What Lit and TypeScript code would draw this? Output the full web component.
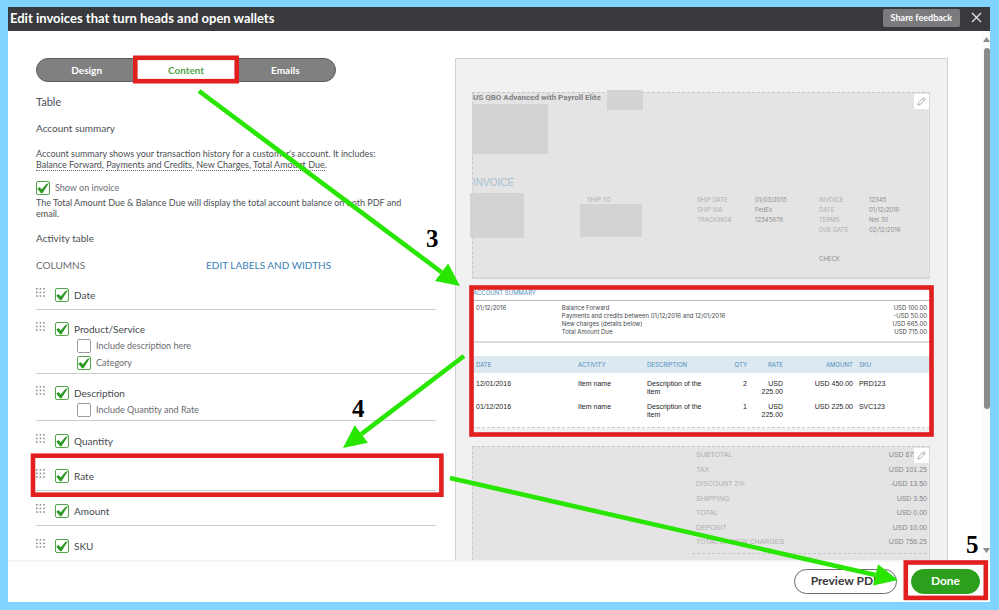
import { LitElement, html, css, svg, nothing } from "lit";
import { customElement, property } from "lit/decorators.js";

interface Column {
  label: string;
  options?: { label: string; checked: boolean }[];
}

const COLUMNS: Column[] = [
  { label: "Date" },
  {
    label: "Product/Service",
    options: [
      { label: "Include description here", checked: false },
      { label: "Category", checked: true },
    ],
  },
  { label: "Description", options: [{ label: "Include Quantity and Rate", checked: false }] },
  { label: "Quantity" },
  { label: "Rate" },
  { label: "Amount" },
  { label: "SKU" },
];

const TERMS = ["Balance Forward", "Payments and Credits", "New Charges", "Total Amount Due"];

const SUMMARY = [
  ["Balance Forward", "USD 100.00"],
  ["Payments and credits between 01/12/2016 and 12/01/2016", "-USD 50.00"],
  ["New charges (details below)", "USD 665.00"],
  ["Total Amount Due", "USD 715.00"],
];

const ITEMS = [
  ["12/01/2016", "Item name", "Description of the item", "2", "USD 225.00", "USD 450.00", "PRD123"],
  ["01/12/2016", "Item name", "Description of the item", "1", "USD 225.00", "USD 225.00", "SVC123"],
];

const TOTALS = [
  ["SUBTOTAL", "USD 675.00"],
  ["TAX", "USD 101.25"],
  ["DISCOUNT 2%", "-USD 13.50"],
  ["SHIPPING", "USD 3.50"],
  ["TOTAL", "USD 0.00"],
  ["DEPOSIT", "USD 10.00"],
  ["TOTAL OF NEW CHARGES", "USD 756.25"],
];

@customElement("check-option")
class CheckOption extends LitElement {
  @property() label = "";
  @property({ type: Boolean }) checked = false;
  @property({ type: Boolean, reflect: true }) small = false;

  static styles = css`
    :host { display: block; }
    .option {
      display: flex;
      align-items: center;
      gap: 5px;
      height: 14px;
      font-size: 10px;
      line-height: 14px;
      color: #45484c;
      white-space: nowrap;
    }
    :host([small]) .option { font-size: 9px; color: #6b6c72; }
    .box {
      appearance: none;
      box-sizing: border-box;
      flex: none;
      width: 14px;
      height: 14px;
      margin: 0;
      border: 1px solid #9a9ca0;
      border-radius: 2px;
      background: #fff;
    }
    .box:checked { border-color: #53a34a; }
    .box:checked::before {
      content: "";
      display: block;
      width: 12px;
      height: 12px;
      background: #2f9a26;
      clip-path: polygon(2% 56%, 20% 42%, 40% 60%, 78% 16%, 100% 8%, 46% 94%, 34% 94%);
    }
  `;

  render() {
    return html`<label class="option">
      <input class="box" type="checkbox" .checked=${this.checked} />
      <span>${this.label}</span>
    </label>`;
  }
}

@customElement("settings-panel")
class SettingsPanel extends LitElement {
  static styles = css`
    :host { display: block; color: #4c4f54; }
    h2, h3, p, ul { margin: 0; padding: 0; font-weight: 400; }
    .tabs {
      display: grid;
      grid-template-columns: repeat(3, 1fr);
      width: 75%;
      height: 24px;
      box-sizing: border-box;
      border: 1px solid #5c5c5c;
      border-radius: 12px;
      background: #808080;
      overflow: hidden;
    }
    .tab {
      border: 0;
      padding: 0;
      background: none;
      color: #fff;
      font: 700 10px/20px var(--ui);
    }
    .tab.active { background: #fff; color: #53a34a; }
    h2 { margin-top: 12px; font-size: 11px; line-height: 16px; }
    h3 { font-size: 10px; line-height: 12px; }
    .summary-title { margin-top: 12px; }
    p { font-size: 9px; line-height: 11px; }
    .intro { margin-top: 14px; }
    .term { border-bottom: 1px dotted #6b6c72; }
    .show { margin-top: 11px; }
    .note { margin-top: 2px; padding-right: 20px; }
    .activity-title { margin-top: 13px; }
    .heads {
      display: grid;
      grid-template-columns: 170fr 230fr;
      margin-top: 15px;
      font-size: 10px;
      line-height: 12px;
      color: #6b6c72;
    }
    a { color: #3a7fb5; text-decoration: none; }
    ul { list-style: none; margin-top: 4px; }
    li {
      display: grid;
      grid-template-columns: 9px 1fr;
      column-gap: 10px;
      padding: 13px 0 7px;
      border-bottom: 1px solid #c9cbcf;
    }
    li.nested { padding: 12px 0 3px; }
    .grip { width: 9px; height: 9px; fill: #8d9096; }
    .options { display: grid; gap: 3px; }
    .child { margin-left: 22px; }
  `;

  render() {
    return html`
      <div class="tabs" role="tablist">
        <button class="tab" role="tab">Design</button>
        <button class="tab active" role="tab" aria-selected="true">Content</button>
        <button class="tab" role="tab">Emails</button>
      </div>
      <h2>Table</h2>
      <h3 class="summary-title">Account summary</h3>
      <p class="intro">
        Account summary shows your transaction history for a customer's account. It includes:<br />
        ${TERMS.map((t, i) => html`${i ? ", " : nothing}<span class="term">${t}</span>`)}.
      </p>
      <check-option class="show" small label="Show on invoice" checked></check-option>
      <p class="note">
        The Total Amount Due &amp; Balance Due will display the total account balance on both PDF and email.
      </p>
      <h3 class="activity-title">Activity table</h3>
      <div class="heads"><span>COLUMNS</span><a href="#labels">EDIT LABELS AND WIDTHS</a></div>
      <ul>
        ${COLUMNS.map(
          (c) => html`<li class=${c.options ? "nested" : ""}>
            <svg class="grip" viewBox="0 0 9 9">
              ${[0, 1, 2].map((r) => [0, 1, 2].map((k) => svg`<rect x=${k * 3.6} y=${r * 3.6} width="1.6" height="1.6" />`))}
            </svg>
            <div class="options">
              <check-option label=${c.label} checked></check-option>
              ${c.options?.map(
                (o) => html`<check-option class="child" small label=${o.label} ?checked=${o.checked}></check-option>`
              )}
            </div>
          </li>`
        )}
      </ul>
    `;
  }
}

@customElement("invoice-preview")
class InvoicePreview extends LitElement {
  static styles = css`
    :host {
      --print: "Liberation Sans", Arial, sans-serif;
      display: block;
      box-sizing: border-box;
      padding: 33px 17px 0 16px;
      border: 1px solid #cfd1d4;
      background: #f1f1f1;
      font-family: Inter, "Liberation Sans", sans-serif;
      font-size: 6px;
      color: #45484c;
    }
    h2, h3, dl, dd { margin: 0; padding: 0; font-weight: 400; }
    .card {
      position: relative;
      border: 1px dashed #c6c8cc;
      border-right: 1px solid #d4d7dc;
      background: #e4e4e4;
    }
    .top { padding-bottom: 13px; border-bottom: 2px solid #d4d7dc; }
    .company { font: 700 8px/10px Roboto, var(--print); color: #808285; }
    .title { margin-top: 74px; font: 400 10px/12px var(--print); color: #a5bfd3; }
    .details {
      display: grid;
      grid-template-columns: 114fr 110fr 58fr 64fr 50fr 60fr;
      margin-top: 6px;
      line-height: 10px;
      color: #aeb0b3;
    }
    .details span { min-height: 10px; }
    .details .value { color: #8d8f92; }
    .details .check { grid-column: 5; margin-top: 19px; color: #8d8f92; }
    .redaction { position: absolute; background: #d1d3d4; }
    .r-name { left: 134px; top: -3px; width: 36px; height: 20px; }
    .r-logo { left: -1px; top: 11px; width: 76px; height: 50px; }
    .r-bill { left: -3px; top: 100px; width: 54px; height: 45px; }
    .r-ship { left: 107px; top: 111px; width: 62px; height: 33px; }
    .edit {
      position: absolute;
      top: 1px;
      right: 0;
      display: grid;
      place-items: center;
      width: 15px;
      height: 15px;
      padding: 0;
      border: 0;
      background: #fff;
    }
    .edit svg { width: 9px; height: 9px; fill: none; stroke: #a3a6ad; stroke-width: 1; }
    .account { margin-top: 10px; padding-bottom: 8px; background: #fff; border-bottom: 1px dashed #c6c8cc; }
    .account h3 { padding: 0 1px 3px; font-size: 6px; line-height: 8px; color: #4f8fbd; border-bottom: 1px solid #b9bbbe; }
    .statement {
      display: grid;
      grid-template-columns: 86fr 366fr;
      padding: 3px 3px 5px 4px;
      border-bottom: 2px solid #dadce2;
      line-height: 8px;
    }
    .line { display: flex; justify-content: space-between; }
    table { width: 100%; margin-top: 13px; border-collapse: collapse; table-layout: fixed; }
    th { padding: 0 3px; height: 17px; background: #dce9f1; color: #4f8fbd; font-weight: 400; text-align: left; }
    td { padding: 7px 3px 0; font: 400 7px/8px var(--print); color: #1c1d1f; vertical-align: top; }
    th:first-child, td:first-child { padding-left: 4px; }
    .num { text-align: right; }
    .bottom { margin-top: 18px; padding: 1px 2px 60px 223px; font: 400 7px/14px var(--print); color: #aeb0b3; }
    .totals { display: grid; align-content: space-between; height: 101px; }
    .total { display: flex; justify-content: space-between; }
    .total dd { color: #85878a; }
    .rule { margin: 4px 0 0 -4px; border-top: 1px dashed #c6c8cc; }
  `;

  private pencil(label: string) {
    return html`<button class="edit" aria-label=${label}>
      <svg viewBox="0 0 10 10"><path d="M1 9 L1.7 6.4 L6.8 1.3 Q7.5 .6 8.2 1.3 L8.8 1.9 Q9.4 2.6 8.7 3.3 L3.6 8.3 Z M6 2.1 L7.9 4" /></svg>
    </button>`;
  }

  render() {
    const details = [
      ["SHIP TO", "SHIP DATE", "01/03/2015", "INVOICE", "12345"],
      ["", "SHIP VIA", "FedEx", "DATE", "01/12/2016"],
      ["", "TRACKING#", "12345678", "TERMS", "Net 30"],
      ["", "", "", "DUE DATE", "02/12/2016"],
    ];
    const heads = ["DATE", "ACTIVITY", "DESCRIPTION", "QTY", "RATE", "AMOUNT", "SKU"];
    const widths = [103, 69, 63, 43, 36, 70, 74];
    const isNum = (i: number) => (i > 2 && i < 6 ? "num" : "");
    return html`
      <section class="card top">
        <div class="company">US QBO Advanced with Payroll Elite</div>
        <h2 class="title">INVOICE</h2>
        <div class="details">
          ${details.map(
            (r) => html`<span></span>${r.map((v, i) => html`<span class=${i === 2 || i === 4 ? "value" : ""}>${v}</span>`)}`
          )}
          <span class="check">CHECK</span>
        </div>
        <div class="redaction r-name"></div>
        <div class="redaction r-logo"></div>
        <div class="redaction r-bill"></div>
        <div class="redaction r-ship"></div>
        ${this.pencil("Edit header")}
      </section>
      <section class="account">
        <h3>ACCOUNT SUMMARY</h3>
        <div class="statement">
          <span>01/12/2016</span>
          <div>${SUMMARY.map(([a, b]) => html`<div class="line"><span>${a}</span><span>${b}</span></div>`)}</div>
        </div>
        <table>
          <colgroup>
            ${widths.map((w) => html`<col style="width:${((w / 458) * 100).toFixed(2)}%" />`)}
          </colgroup>
          <thead>
            <tr>${heads.map((h, i) => html`<th class=${isNum(i)}>${h}</th>`)}</tr>
          </thead>
          <tbody>
            ${ITEMS.map((r) => html`<tr>${r.map((v, i) => html`<td class=${isNum(i)}>${v}</td>`)}</tr>`)}
          </tbody>
        </table>
      </section>
      <section class="card bottom">
        <dl class="totals">
          ${TOTALS.map(([a, b]) => html`<div class="total"><dt>${a}</dt><dd>${b}</dd></div>`)}
        </dl>
        <div class="rule"></div>
        ${this.pencil("Edit totals")}
      </section>
    `;
  }
}

@customElement("step-guide")
class StepGuide extends LitElement {
  static styles = css`
    :host { position: absolute; inset: -7px -9px -8px -8px; pointer-events: none; }
    svg { display: block; width: 100%; height: 100%; }
    .frame { fill: none; stroke: #e11f1f; stroke-width: 4.6; }
    .shaft { stroke: #28e600; stroke-width: 4.6; }
    .head { fill: #28e600; }
    text { font: 700 25px "Liberation Serif", serif; fill: #000; }
  `;

  private arrow(x1: number, y1: number, x2: number, y2: number) {
    const len = Math.hypot(x2 - x1, y2 - y1);
    const dx = (x2 - x1) / len;
    const dy = (y2 - y1) / len;
    const bx = x2 - dx * 23;
    const by = y2 - dy * 23;
    const pts = [
      [x2, y2],
      [bx - dy * 11, by + dx * 11],
      [bx + dy * 11, by - dx * 11],
    ];
    return svg`<line class="shaft" x1=${x1} y1=${y1} x2=${bx} y2=${by} />
      <polygon class="head" points=${pts.map((p) => p.join(",")).join(" ")} />`;
  }

  render() {
    return html`<svg viewBox="0 0 999 610" preserveAspectRatio="none">
      <rect class="frame" x="135.3" y="57.8" width="101.4" height="23.4" />
      <rect class="frame" x="33" y="455.7" width="408.4" height="39" />
      <rect class="frame" x="471.5" y="287.5" width="460" height="147" />
      <rect class="frame" x="905.8" y="562.5" width="80" height="35.4" />
      ${this.arrow(199, 91, 460, 286)} ${this.arrow(464, 356, 343, 448)} ${this.arrow(450, 478, 898, 580)}
      <text x="426" y="247">3</text>
      <text x="352" y="417">4</text>
      <text x="966" y="553">5</text>
    </svg>`;
  }
}

@customElement("app-root")
class AppRoot extends LitElement {
  static styles = css`
    :host {
      --ui: Lato, "Open Sans", sans-serif;
      position: relative;
      display: flex;
      flex-direction: column;
      box-sizing: border-box;
      height: 100vh;
      border: 8px solid #80d4ff;
      border-top-width: 7px;
      border-right-width: 9px;
      background: #fff;
      font-family: var(--ui);
      overflow: hidden;
    }
    header {
      display: flex;
      flex: none;
      align-items: center;
      box-sizing: border-box;
      height: 24px;
      padding: 0 8px 3px 2px;
      background: #393a3d;
      color: #fff;
    }
    h1 { flex: 1; margin: 0; font-size: 13px; line-height: 18px; }
    .feedback {
      height: 18px;
      padding: 0 8px;
      border: 0;
      border-radius: 2px;
      background: #7b7b7d;
      color: #fff;
      font: 700 9px/18px var(--ui);
    }
    .close { display: grid; margin-left: 11px; padding: 0; border: 0; background: none; }
    .close svg { width: 11px; height: 11px; stroke: #e3e3e5; stroke-width: 1.3; }
    main { display: flex; flex: 1; min-height: 0; overflow: hidden; }
    .workspace {
      display: grid;
      flex: 1;
      grid-template-columns: 400fr 493fr;
      column-gap: 19px;
      align-items: start;
      padding: 27px 34px 0 28px;
    }
    .scroll { display: flex; flex-direction: column; align-items: flex-end; width: 8px; padding-top: 6px; background: #fbfbfb; }
    .up, .down { width: 7px; height: 5px; background: #8a8a8a; }
    .up { clip-path: polygon(50% 0, 100% 100%, 0 100%); }
    .down { margin: auto 0 7px; clip-path: polygon(0 0, 100% 0, 50% 100%); }
    .thumb { width: 6px; height: 69%; margin-top: 6px; border-radius: 3px; background: #8a8a8a; }
    footer {
      display: flex;
      flex: none;
      align-items: center;
      justify-content: flex-end;
      box-sizing: border-box;
      gap: 14px;
      height: 42px;
      padding: 0 10px 2px 0;
      border-top: 2px solid #f3f4f7;
    }
    .action {
      box-sizing: border-box;
      height: 25px;
      border: 1px solid #6b6c72;
      border-radius: 13px;
      padding: 0 16px;
      background: #fff;
      color: #393a3d;
      font: 700 12px/20px var(--ui);
    }
    .primary { padding: 0 19px; border-color: #2ca01c; background: #2ca01c; color: #fff; }
  `;

  render() {
    return html`
      <header>
        <h1>Edit invoices that turn heads and open wallets</h1>
        <button class="feedback">Share feedback</button>
        <button class="close" aria-label="Close">
          <svg viewBox="0 0 11 11"><path d="M1 1 L10 10 M10 1 L1 10" /></svg>
        </button>
      </header>
      <main>
        <div class="workspace">
          <settings-panel></settings-panel>
          <invoice-preview></invoice-preview>
        </div>
        <div class="scroll">
          <div class="up"></div>
          <div class="thumb"></div>
          <div class="down"></div>
        </div>
      </main>
      <footer>
        <button class="action">Preview PDF</button>
        <button class="action primary">Done</button>
      </footer>
      <step-guide></step-guide>
    `;
  }
}
